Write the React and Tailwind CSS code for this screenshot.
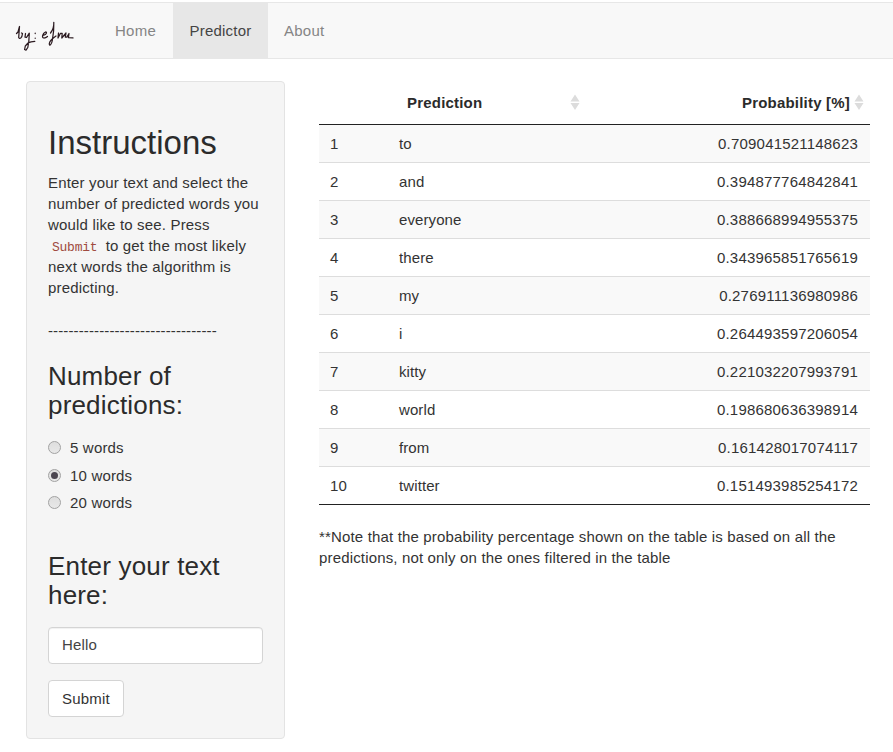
const rows = [
  ["to", "0.709041521148623"],
  ["and", "0.394877764842841"],
  ["everyone", "0.388668994955375"],
  ["there", "0.343965851765619"],
  ["my", "0.276911136980986"],
  ["i", "0.264493597206054"],
  ["kitty", "0.221032207993791"],
  ["world", "0.198680636398914"],
  ["from", "0.161428017074117"],
  ["twitter", "0.151493985254172"],
];

function Signature() {
  return (
    <svg width="99" height="55" viewBox="0 3 99 55" fill="none" stroke="#2b1a20" strokeWidth="1.25" strokeLinecap="round" strokeLinejoin="round" aria-label="by: efm">
      <path d="M16.5 33.5 18 32 19.5 26.5 18.7 37.5C19.5 39.5 22 38.5 22.5 33.5L21.5 33" />
      <path d="M25.5 33.5 25 37.2 26.5 37.5 29.3 33.2 28.8 41.5 27.8 47.5 26 50.2 24.6 49.5 25.3 46 28 43 31 41.8 34.8 41.3" />
      <path d="M35.2 33.2v.3M35.2 38v.3" />
      <path d="M43.8 35.2C47 34 47 31.8 45.5 32 42.5 33.5 41.5 37.8 43.8 38 45 38 46.5 37.4 47.5 36.5" />
      <path d="M50.5 33C53 30 54 26 53.8 22.3L53.6 31 52.3 40.5C51.5 45 49.3 46.5 49.3 43.5 49.8 40.5 53 38 56 36" />
      <path d="M58.5 33 58 38 60.5 33.3 62.2 33.3 61.8 38 66 33 65.3 37.2 66.8 37.2 69 33.5 68.4 37.7 73 37.9" />
    </svg>
  );
}

function SortIcon() {
  return (
    <svg width="10" height="16" viewBox="0 0 10 16" fill="#dcdcdc">
      <path d="M0.5 7.5 5 0.5 9.5 7.5ZM0.5 9 9.5 9 5 16Z" />
    </svg>
  );
}

function Radio({ label, checked }) {
  return (
    <label className="flex h-[27.5px] items-center">
      <span className="mr-[9px] flex h-[13px] w-[13px] items-center justify-center rounded-full border border-[#a2a2a2] bg-gradient-to-b from-[#dedede] to-[#e8e8e8]">
        {checked && <span className="h-[7px] w-[7px] rounded-full bg-[#4b4650]" />}
      </span>
      <input type="radio" name="count" className="sr-only" defaultChecked={checked} />
      <span className="tracking-[0.18px]">{label}</span>
    </label>
  );
}

export default function App() {
  return (
    <div className="h-[752px] overflow-hidden bg-white pt-[2px] font-['Liberation_Sans',Arial,sans-serif] text-[15px] leading-[21px] text-[#333]">
      <nav className="flex h-[57px] border-y border-[#e7e7e7] bg-[#f8f8f8] text-[#777]">
        <Signature />
        <a className="flex w-[74px] items-center pl-4 tracking-[0.25px] text-[#858585]">Home</a>
        <a className="flex w-[95px] items-center justify-center bg-[#e7e7e7] tracking-[0.2px] text-[#444]">Predictor</a>
        <a className="flex items-center pl-4 tracking-[0.25px] text-[#858585]">About</a>
      </nav>
      <main className="flex items-start pl-[26px] pt-[22px]">
        <form className="h-[658px] w-[259px] rounded-[4px] border border-[#e3e3e3] bg-[#f5f5f5] px-[21px] pt-[42px]">
          <h1 className="whitespace-nowrap text-[33px] leading-[38px] text-[#2b2b2b]">Instructions</h1>
          <p className="mt-[10px] whitespace-nowrap tracking-[0.17px]">
            Enter your text and select the<br />
            number of predicted words you<br />
            would like to see. Press<br />
            <code className="px-1 font-['Liberation_Mono',monospace] text-[13px] leading-none tracking-[-0.25px] text-[#a04a40]">Submit</code> to get the most likely<br />
            next words the algorithm is<br />
            predicting.
          </p>
          <p className="mt-[22px] tracking-[0.12px]">---------------------------------</p>
          <h2 className="mt-[21px] whitespace-nowrap text-[26px] leading-[29px] tracking-[0.18px] text-[#2b2b2b]">
            Number of<br />predictions:
          </h2>
          <div className="mt-[14px]">
            <Radio label="5 words" />
            <Radio label="10 words" checked />
            <Radio label="20 words" />
          </div>
          <h2 className="mt-[35px] whitespace-nowrap text-[26px] leading-[29px] tracking-[0.18px] text-[#2b2b2b]">
            Enter your text<br />here:
          </h2>
          <input
            defaultValue="Hello"
            className="mt-[17px] block h-[37px] w-[215px] rounded-[4px] border border-[#d4d4d4] bg-white px-[13px] pb-[2px] text-[15px] tracking-[0.15px] text-[#444] shadow-[inset_0_1px_1px_rgba(0,0,0,0.06)]"
          />
          <button type="button" className="mt-4 h-[37px] w-[76px] rounded-[4px] border border-[#d4d4d4] bg-white tracking-[0.2px]">Submit</button>
        </form>
        <section className="ml-[34px] w-[551px]">
          <table className="w-full table-fixed border-collapse border-b border-[#222]">
            <colgroup>
              <col className="w-[69px]" />
              <col className="w-[200px]" />
              <col />
            </colgroup>
            <thead>
              <tr className="h-[43px] border-b border-[#222] text-[#2b2b2b]">
                <th />
                <th className="p-0">
                  <div className="flex items-center justify-between pl-[19px] pr-[8px]">
                    <span className="tracking-[0.2px]">Prediction</span>
                    <SortIcon />
                  </div>
                </th>
                <th className="p-0">
                  <div className="flex items-center justify-end gap-[4px] pr-[6px]">
                    <span className="tracking-[0.2px]">Probability [%]</span>
                    <SortIcon />
                  </div>
                </th>
              </tr>
            </thead>
            <tbody>
              {rows.map(([word, value], i) => (
                <tr key={word} className="h-[38px] border-t border-[#ddd] odd:bg-[#f9f9f9] first:border-[#222]">
                  <td className="p-0 pl-[11px] tracking-[0.2px]">{i + 1}</td>
                  <td className="p-0 pl-[11px] tracking-[0.1px]">{word}</td>
                  <td className="p-0 pr-[12px] text-right tracking-[0.2px]">{value}</td>
                </tr>
              ))}
            </tbody>
          </table>
          <p className="mt-[21px] whitespace-nowrap tracking-[0.16px]">
            **Note that the probability percentage shown on the table is based on all the<br />
            predictions, not only on the ones filtered in the table
          </p>
        </section>
      </main>
    </div>
  );
}
